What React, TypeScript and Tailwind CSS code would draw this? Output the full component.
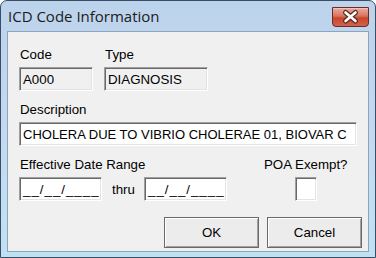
import React from "react";

const boxCls =
  "h-[24px] flex items-center px-[3px] whitespace-nowrap overflow-hidden border border-t-[#a0a0a0] border-l-[#a0a0a0] border-b-white border-r-white shadow-[inset_1px_1px_0_#696969,inset_-1px_-1px_0_#e3e3e3]";

const btnCls =
  "w-[95px] h-[31px] flex items-center justify-center border border-[#6a6a6a] bg-[#ececec] shadow-[inset_1px_1px_0_#ffffff,inset_-1px_-1px_0_#a0a0a0] text-[13.3px] text-black";

function CloseButton() {
  return (
    <svg width="37" height="20" viewBox="0 0 37 20" className="mt-[6px]">
      <defs>
        <linearGradient id="cg" x1="0" y1="0" x2="0" y2="1">
          <stop offset="0" stopColor="#eab0a4" />
          <stop offset="0.45" stopColor="#d9735f" />
          <stop offset="0.55" stopColor="#c9452b" />
          <stop offset="1" stopColor="#d26450" />
        </linearGradient>
      </defs>
      <path
        d="M0.5 0.5 H36.5 V16 Q36.5 19.5 33 19.5 H4 Q0.5 19.5 0.5 16 Z"
        fill="url(#cg)"
        stroke="#6e2b22"
      />
      <path d="M1.5 1.5 H35.5" stroke="#f4d0c8" strokeWidth="1" opacity="0.7" />
      <path
        d="M13.5 5.5 L23.5 14 M23.5 5.5 L13.5 14"
        stroke="#5a2a24"
        strokeWidth="5"
        strokeLinecap="round"
      />
      <path
        d="M13.5 5.5 L23.5 14 M23.5 5.5 L13.5 14"
        stroke="#ffffff"
        strokeWidth="2.6"
        strokeLinecap="round"
      />
    </svg>
  );
}

export default function App() {
  return (
    <div
      className="w-[376px] h-[258px] flex flex-col overflow-hidden border border-[#3a4d66] rounded-t-[7px] bg-gradient-to-b from-[#bcd3ec] via-[#c4d9ef] to-[#bfe2f3]"
      style={{ fontFamily: '"Liberation Sans", Arial, sans-serif' }}
    >
      <div className="h-[30px] shrink-0 flex items-start justify-between pl-[7px] pr-[6px]">
        <span
          className="mt-[5px] text-[15px] leading-[20px] text-[#1b1b1b]"
          style={{ fontFamily: '"Open Sans", "Noto Sans", sans-serif' }}
        >
          ICD Code Information
        </span>
        <CloseButton />
      </div>
      <div className="flex-1 mx-[6px] mb-[5px] bg-[#f0f0f0] border border-[#8ea3bc] pl-[11px] pr-[6px] pt-[15px] text-[13.3px] leading-[15px] text-black">
        <div className="flex gap-[11px]">
          <div className="w-[74px] flex flex-col">
            <span className="pl-[1px]">Code</span>
            <div className={boxCls + " mt-[5px] bg-[#f0f0f0]"}>A000</div>
          </div>
          <div className="w-[104px] flex flex-col">
            <span className="pl-[1px]">Type</span>
            <div className={boxCls + " mt-[5px] bg-[#f0f0f0]"}>DIAGNOSIS</div>
          </div>
        </div>
        <div className="mt-[11px] flex flex-col">
          <span className="pl-[1px]">Description</span>
          <div className={boxCls + " mt-[5px] w-[338px] bg-white text-[13px]"}>
            CHOLERA DUE TO VIBRIO CHOLERAE 01, BIOVAR C
          </div>
        </div>
        <div className="mt-[11px] flex">
          <div className="w-[208px] flex flex-col">
            <span className="pl-[1px]">Effective Date Range</span>
            <div className="mt-[5px] flex items-center">
              <div className={boxCls + " w-[83px] bg-white tracking-[1px]"}>__/__/____</div>
              <span className="ml-[10px] w-[32px]">thru</span>
              <div className={boxCls + " w-[83px] bg-white tracking-[1px]"}>__/__/____</div>
            </div>
          </div>
          <div className="ml-[37px] flex flex-col items-center">
            <span>POA Exempt?</span>
            <div className={boxCls + " mt-[5px] w-[22px] bg-white"}></div>
          </div>
        </div>
        <div className="mt-[16px] flex justify-end gap-[8px]">
          <div className={btnCls}>OK</div>
          <div className={btnCls}>Cancel</div>
        </div>
      </div>
    </div>
  );
}
